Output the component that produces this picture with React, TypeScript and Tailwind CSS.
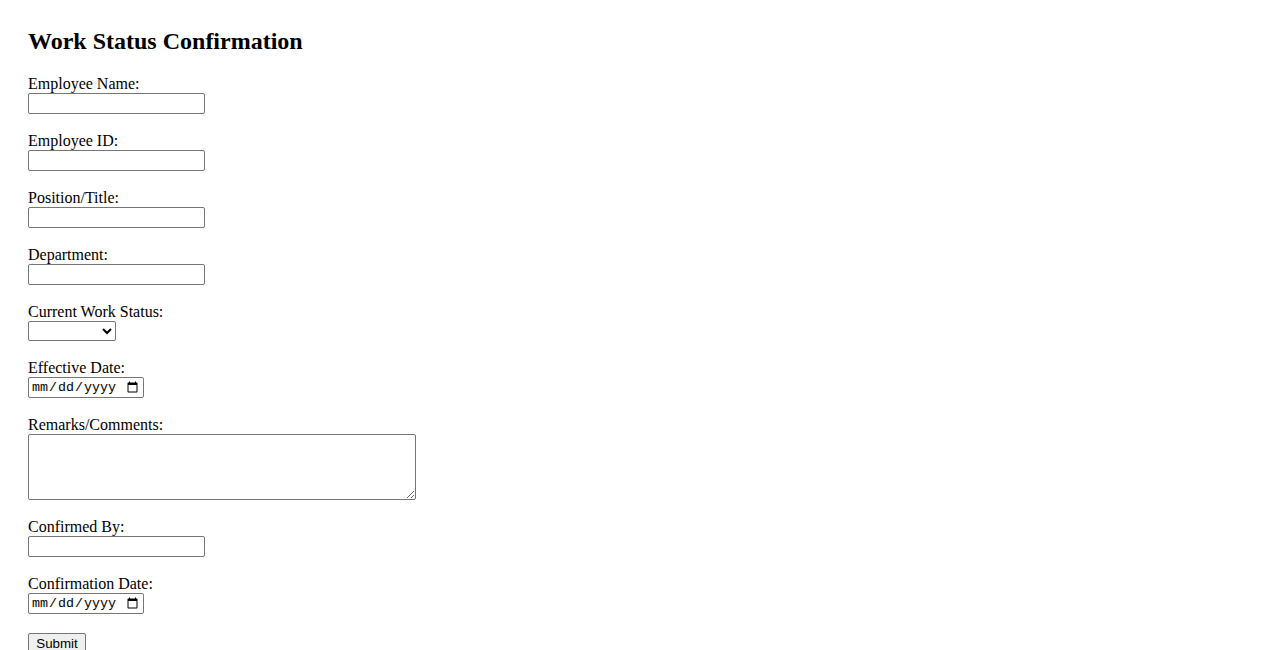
import React, { useState } from "react";

const inputCls =
  "block w-[177px] h-[21px] border border-[#767676] rounded-[2px] px-[2px] py-[1px] text-[13px] font-['Liberation_Sans'] bg-white";

const dateCls =
  "block w-[116px] h-[21px] border border-[#767676] rounded-[2px] px-[2px] py-[1px] text-[13.33px] font-['Liberation_Mono'] bg-white";

const App = () => {
  const [status, setStatus] = useState("");

  return (
    <div className="min-h-screen bg-white text-black font-['Liberation_Serif',serif] px-[28px] pt-[28px]">
      <h2 className="text-2xl font-bold leading-[27px] mb-[20px]">Work Status Confirmation</h2>

      <form onSubmit={(e) => e.preventDefault()}>
        <div className="mb-[18px]">
          <label className="block text-base leading-[18px]">Employee Name:</label>
          <input type="text" className={inputCls} />
        </div>

        <div className="mb-[18px]">
          <label className="block text-base leading-[18px]">Employee ID:</label>
          <input type="text" className={inputCls} />
        </div>

        <div className="mb-[18px]">
          <label className="block text-base leading-[18px]">Position/Title:</label>
          <input type="text" className={inputCls} />
        </div>

        <div className="mb-[18px]">
          <label className="block text-base leading-[18px]">Department:</label>
          <input type="text" className={inputCls} />
        </div>

        <div className="mb-[18px]">
          <label className="block text-base leading-[18px]">Current Work Status:</label>
          <select
            value={status}
            onChange={(e) => setStatus(e.target.value)}
            className="block w-[88px] h-[20px] border border-[#767676] rounded-[2px] text-[13px] font-['Liberation_Sans'] bg-white appearance-auto"
          >
            <option value=""></option>
            <option value="active">Active</option>
            <option value="leave">On Leave</option>
            <option value="terminated">Terminated</option>
          </select>
        </div>

        <div className="mb-[18px]">
          <label className="block text-base leading-[18px]">Effective Date:</label>
          <input type="date" className={dateCls} />
        </div>

        <div className="mb-[18px]">
          <label className="block text-base leading-[18px]">Remarks/Comments:</label>
          <textarea className="block w-[388px] h-[66px] border border-[#767676] rounded-[2px] px-[2px] py-[2px] text-[13px] font-['Liberation_Mono'] bg-white resize" />
        </div>

        <div className="mb-[18px]">
          <label className="block text-base leading-[18px]">Confirmed By:</label>
          <input type="text" className={inputCls} />
        </div>

        <div className="mb-[19px]">
          <label className="block text-base leading-[18px]">Confirmation Date:</label>
          <input type="date" className={dateCls} />
        </div>

        <button
          type="submit"
          className="block w-[58px] h-[21px] border border-[#767676] rounded-[2px] bg-[#efefef] text-[13.33px] font-['Liberation_Sans'] text-black leading-none"
        >
          Submit
        </button>
      </form>
    </div>
  );
};

export default App;
